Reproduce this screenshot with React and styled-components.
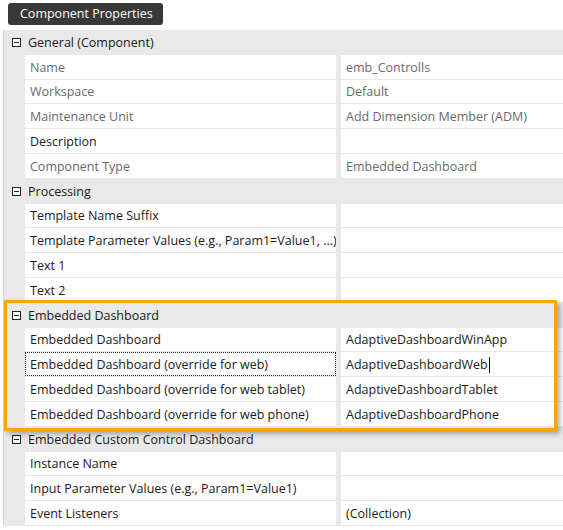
import React from "react";
import styled, { createGlobalStyle } from "styled-components";

const GlobalStyle = createGlobalStyle`
  html, body {
    margin: 0;
    padding: 0;
    background: #ffffff;
  }
  body {
    font-family: "Open Sans", "Noto Sans", "Liberation Sans", sans-serif;
    font-size: 12.5px;
    color: #1a1a1a;
  }
`;

const sections = [
  {
    title: "General (Component)",
    rows: [
      { label: "Name", value: "emb_Controlls", readOnly: true },
      { label: "Workspace", value: "Default", readOnly: true },
      { label: "Maintenance Unit", value: "Add Dimension Member (ADM)", readOnly: true },
      { label: "Description", value: "" },
      { label: "Component Type", value: "Embedded Dashboard", readOnly: true },
    ],
  },
  {
    title: "Processing",
    rows: [
      { label: "Template Name Suffix", value: "" },
      { label: "Template Parameter Values (e.g., Param1=Value1, ...)", value: "" },
      { label: "Text 1", value: "" },
      { label: "Text 2", value: "" },
    ],
  },
  {
    title: "Embedded Dashboard",
    rows: [
      { label: "Embedded Dashboard", value: "AdaptiveDashboardWinApp" },
      { label: "Embedded Dashboard (override for web)", value: "AdaptiveDashboardWeb", focused: true },
      { label: "Embedded Dashboard (override for web tablet)", value: "AdaptiveDashboardTablet" },
      { label: "Embedded Dashboard (override for web phone)", value: "AdaptiveDashboardPhone" },
    ],
  },
  {
    title: "Embedded Custom Control Dashboard",
    rows: [
      { label: "Instance Name", value: "" },
      { label: "Input Parameter Values (e.g., Param1=Value1)", value: "" },
      { label: "Event Listeners", value: "(Collection)" },
    ],
  },
];

export default function App() {
  return (
    <Page>
      <GlobalStyle />
      <TitleRow>
        <TitleTab>Component Properties</TitleTab>
      </TitleRow>
      <Grid>
        {sections.map((section) => (
          <Section key={section.title}>
            <CategoryHeader>
              <CollapseIcon />
              <span>{section.title}</span>
            </CategoryHeader>
            {section.rows.map((row) => (
              <PropRow key={row.label}>
                <LabelCell $readOnly={row.readOnly} $focused={row.focused}>
                  {row.label}
                </LabelCell>
                <ValueCell $readOnly={row.readOnly}>
                  {row.value}
                  {row.focused && <Caret />}
                </ValueCell>
              </PropRow>
            ))}
          </Section>
        ))}
      </Grid>
      <Highlight />
    </Page>
  );
}

const Page = styled.div`
  position: relative;
  width: 563px;
  height: 530px;
  overflow: hidden;
`;

const TitleRow = styled.div`
  display: flex;
  padding: 3px 0 5px 8px;
`;

const TitleTab = styled.div`
  display: flex;
  align-items: center;
  height: 22px;
  padding: 1px 10px 0 12px;
  box-sizing: border-box;
  border-radius: 3px;
  background: #383838;
  color: #ffffff;
  line-height: 1;
`;

const Grid = styled.div`
  margin-left: 3px;
  border-left: 1px solid #d4d4d4;
  padding-left: 1px;
  background: #e9e9e9;
`;

const Section = styled.div`
  display: flex;
  flex-direction: column;
`;

const CategoryHeader = styled.div`
  display: flex;
  align-items: center;
  gap: 7px;
  height: 24.8px;
  padding: 1px 0 0 7px;
  box-sizing: border-box;
  color: #1a1a1a;
`;

const CollapseIcon = styled.span`
  position: relative;
  box-sizing: border-box;
  width: 9px;
  height: 9px;
  border: 1px solid #222;
  background: #fff;

  &::after {
    content: "";
    position: absolute;
    left: 1px;
    right: 1px;
    top: 3px;
    height: 1px;
    background: #222;
  }
`;

const PropRow = styled.div`
  display: grid;
  grid-template-columns: 311px 1fr;
  column-gap: 5px;
  height: 24.8px;
  margin-left: 20px;
  padding-bottom: 1px;
  box-sizing: border-box;
`;

const LabelCell = styled.div`
  display: flex;
  align-items: center;
  box-sizing: border-box;
  padding: 1px 0 0 5px;
  background: #ffffff;
  color: ${({ $readOnly }) => ($readOnly ? "#6a6a6a" : "#1a1a1a")};
  white-space: nowrap;
  overflow: hidden;
  outline: ${({ $focused }) => ($focused ? "1px dotted #222" : "none")};
  outline-offset: -1px;
`;

const ValueCell = styled.div`
  display: flex;
  align-items: center;
  box-sizing: border-box;
  padding: 1px 0 0 5px;
  background: #ffffff;
  color: ${({ $readOnly }) => ($readOnly ? "#6a6a6a" : "#1a1a1a")};
  white-space: nowrap;
  overflow: hidden;
`;

const Caret = styled.span`
  display: inline-block;
  width: 1px;
  height: 16px;
  margin-left: 1px;
  background: #000;
`;

const Highlight = styled.div`
  position: absolute;
  left: 4px;
  top: 300px;
  width: 553px;
  height: 131px;
  box-sizing: border-box;
  border: 3px solid #f6a800;
  box-shadow: 3px 3px 5px rgba(0, 0, 0, 0.3);
  pointer-events: none;
`;
